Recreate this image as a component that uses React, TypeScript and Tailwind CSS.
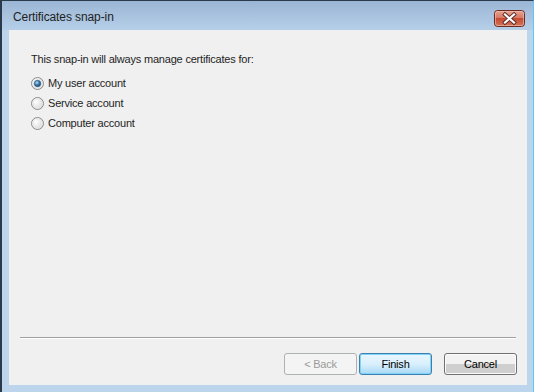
import React from "react";

const font = { fontFamily: '"Liberation Sans", Arial, sans-serif' };

function CloseButton() {
  return (
    <svg width="31" height="17" viewBox="0 0 31 17" className="absolute left-[494px] top-[10px]">
      <defs>
        <linearGradient id="closeBg" x1="0" y1="0" x2="0" y2="1">
          <stop offset="0" stopColor="#e8a493" />
          <stop offset="0.45" stopColor="#d77a66" />
          <stop offset="0.5" stopColor="#c74a33" />
          <stop offset="1" stopColor="#d2765a" />
        </linearGradient>
      </defs>
      <rect x="0.5" y="0.5" width="30" height="16" rx="3" fill="url(#closeBg)" stroke="#6b2a22" />
      <rect x="1.5" y="1.5" width="28" height="14" rx="2" fill="none" stroke="#f2c4b8" strokeOpacity="0.6" />
      <path d="M11 4.5 L20 12.5 M20 4.5 L11 12.5" stroke="#5a2520" strokeWidth="4" strokeLinecap="square" />
      <path d="M11 4.5 L20 12.5 M20 4.5 L11 12.5" stroke="#ffffff" strokeWidth="2.2" strokeLinecap="square" />
    </svg>
  );
}

function Radio({ checked }: { checked?: boolean }) {
  return (
    <svg width="13" height="13" viewBox="0 0 13 13" className="shrink-0">
      <defs>
        <radialGradient id={checked ? "rOn" : "rOff"} cx="0.35" cy="0.35" r="0.8">
          <stop offset="0" stopColor="#ffffff" />
          <stop offset="1" stopColor="#d4d4d4" />
        </radialGradient>
        <radialGradient id="dot" cx="0.4" cy="0.35" r="0.7">
          <stop offset="0" stopColor="#b9dcf5" />
          <stop offset="0.5" stopColor="#3c7fb1" />
          <stop offset="1" stopColor="#123e68" />
        </radialGradient>
      </defs>
      <circle cx="6.5" cy="6.5" r="6" fill={`url(#${checked ? "rOn" : "rOff"})`} stroke="#8c8c8c" />
      <circle cx="6.5" cy="6.5" r="4.7" fill="none" stroke="#e6e6e6" />
      {checked && <circle cx="6.5" cy="6.5" r="3.2" fill="url(#dot)" stroke="#1e4f7a" strokeWidth="0.6" />}
    </svg>
  );
}

function Btn({ label, variant }: { label: string; variant?: "disabled" | "default" }) {
  if (variant === "disabled") {
    return (
      <div className="flex h-[22px] w-[73px] items-center justify-center rounded-[3px] border border-[#adb2b5] bg-[#f4f4f4] text-[#9a9a9a]">
        {label}
      </div>
    );
  }
  if (variant === "default") {
    return (
      <div className="flex h-[22px] w-[73px] items-center justify-center rounded-[3px] border border-[#3c7fb1] bg-gradient-to-b from-[#eaf6fd] via-[#d9f0fc] to-[#a7d9f5] text-black shadow-[inset_0_0_0_1px_#7ed3f7]">
        {label}
      </div>
    );
  }
  return (
    <div className="flex h-[22px] w-[73px] items-center justify-center rounded-[3px] border border-[#707070] bg-gradient-to-b from-[#f2f2f2] from-50% to-[#cfcfcf] to-50% text-black shadow-[inset_0_0_0_1px_#fcfcfc]">
      {label}
    </div>
  );
}

export default function App() {
  return (
    <div className="relative h-[392px] w-[534px] overflow-hidden bg-[#bcd4ec] text-[11px] tracking-[-0.2px]" style={font}>
      <div className="absolute inset-0 border-l-2 border-t border-[#2b3a4a] border-r border-r-[#5ec8f0]" />
      <div className="h-[30px] bg-gradient-to-b from-[#9ab5d4] to-[#b6cfe9] pl-[13px] pt-[8px] text-[12px] tracking-[-0.1px] text-[#1e1e1e]">
        Certificates snap-in
      </div>
      <CloseButton />
      <div className="ml-[9px] mr-[7px] flex h-[355px] flex-col bg-[#f0f0f0]">
        <div className="flex flex-1 flex-col pl-[22px] pt-[21px] text-[#1e1e1e]">
          <div className="h-[17px] leading-[17px]">This snap-in will always manage certificates for:</div>
          <div className="mt-[9px] flex flex-col gap-[7px]">
            <label className="flex h-[13px] items-center gap-[4px]">
              <Radio checked />
              <span>My user account</span>
            </label>
            <label className="flex h-[13px] items-center gap-[4px]">
              <Radio />
              <span>Service account</span>
            </label>
            <label className="flex h-[13px] items-center gap-[4px]">
              <Radio />
              <span>Computer account</span>
            </label>
          </div>
        </div>
        <div className="ml-[11px] mr-[11px] h-[2px] border-t border-[#a0a0a0] border-b border-b-white" />
        <div className="flex h-[46px] items-start justify-end gap-[12px] pr-[10px] pt-[14px]">
          <div className="flex gap-[2px]">
            <Btn label="< Back" variant="disabled" />
            <Btn label="Finish" variant="default" />
          </div>
          <Btn label="Cancel" />
        </div>
      </div>
    </div>
  );
}
